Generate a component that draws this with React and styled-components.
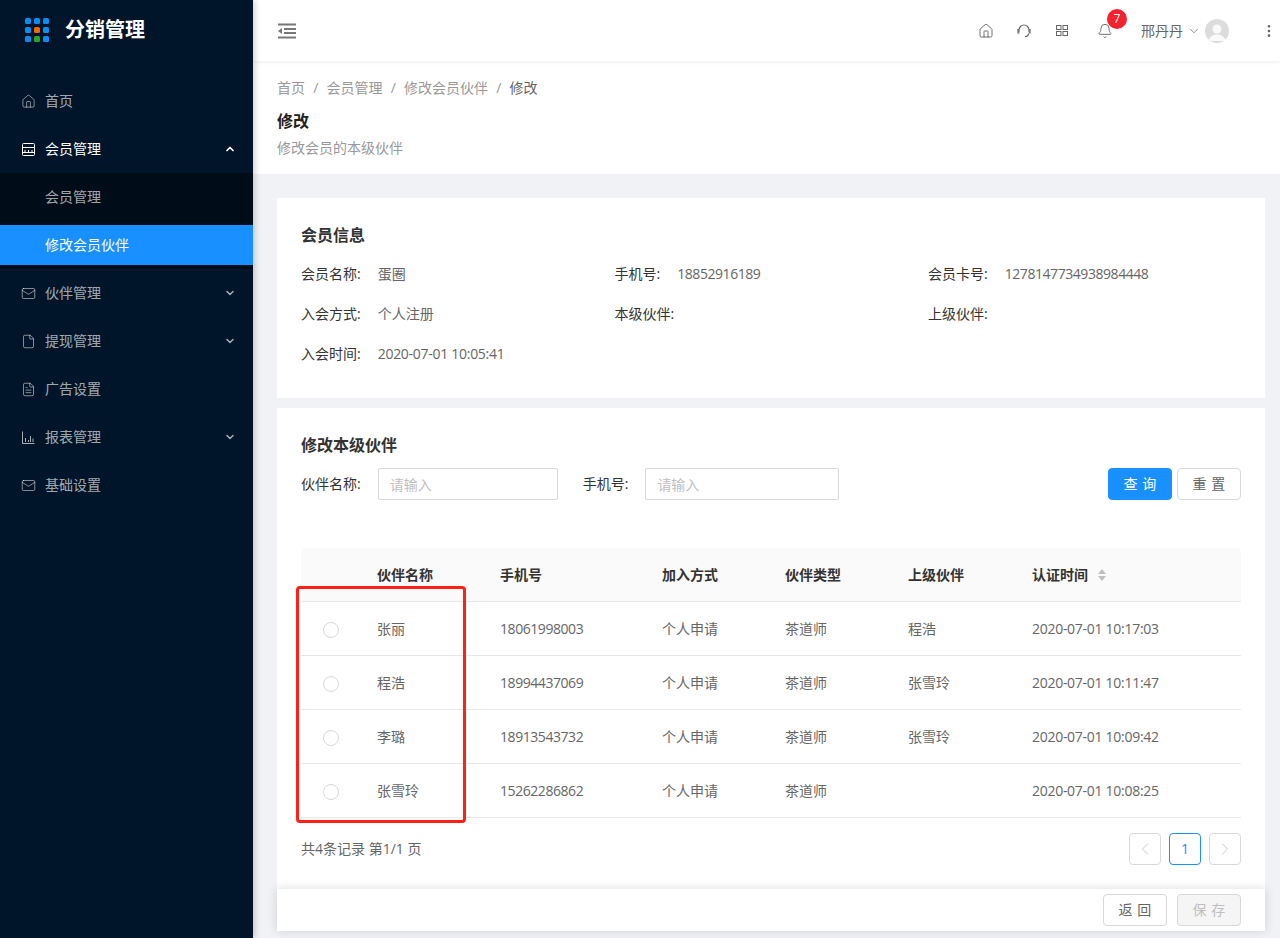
import styled, { createGlobalStyle } from 'styled-components';
import { ChevronDown, ChevronLeft, ChevronRight, ChevronUp, Home, Mail, File, FileText, Bell, MoreVertical } from 'lucide-react';

const GlobalStyle = createGlobalStyle`
  html, body {
    margin: 0;
    padding: 0;
    height: 100%;
    overflow: hidden;
    background: #f0f2f5;
  }
  body {
    font-family: "Open Sans", "Noto Sans CJK SC", sans-serif;
    font-size: 14px;
    line-height: 22px;
    color: #666;
  }
  * { box-sizing: border-box; }
`;

const Layout = styled.div`
  display: flex;
  height: 938px;
  position: relative;
  overflow: hidden;
`;

const Sider = styled.aside`
  width: 253px;
  flex: none;
  background: #001529;
  box-shadow: 2px 0 6px rgba(0, 21, 41, 0.2);
  z-index: 3;
`;

const Logo = styled.div`
  height: 60px;
  margin-bottom: 21px;
  display: flex;
  align-items: center;
  gap: 16px;
  padding-left: 25px;
  color: #fff;
  font-size: 20px;
  font-weight: 700;
`;

const MenuList = styled.nav`
  display: flex;
  flex-direction: column;
`;

const MenuItem = styled.div`
  height: 40px;
  margin-bottom: ${p => (p.$open ? 4 : 8)}px;
  display: flex;
  align-items: center;
  gap: 9px;
  padding: 0 17px 0 21px;
  color: ${p => (p.$open ? '#fff' : 'rgba(255, 255, 255, 0.65)')};
  svg { flex: none; }
`;

const MenuLabel = styled.span`
  flex: 1;
`;

const SubMenu = styled.div`
  background: #000c17;
  padding: 4px 0;
  margin-bottom: 4px;
  display: flex;
  flex-direction: column;
  gap: 8px;
`;

const SubItem = styled.div`
  height: 40px;
  line-height: 40px;
  padding-left: 45px;
  color: ${p => (p.$active ? '#fff' : 'rgba(255, 255, 255, 0.65)')};
  background: ${p => (p.$active ? '#1890ff' : 'transparent')};
`;

const Main = styled.main`
  flex: 1;
  min-width: 0;
  display: flex;
  flex-direction: column;
`;

const Topbar = styled.header`
  height: 61px;
  flex: none;
  background: #fff;
  box-shadow: 0 1px 4px rgba(0, 21, 41, 0.08);
  display: flex;
  align-items: center;
  padding: 0 3px 0 24px;
  z-index: 2;
  color: #666;
`;

const Spacer = styled.div`
  flex: 1;
`;

const TopIcon = styled.span`
  display: flex;
  width: ${p => p.$w || 38}px;
  justify-content: center;
  position: relative;
`;

const Badge = styled.span`
  position: absolute;
  top: -14px;
  left: 26px;
  width: 20px;
  height: 20px;
  border-radius: 50%;
  background: #f5222d;
  color: #fff;
  font-size: 12px;
  line-height: 20px;
  text-align: center;
`;

const UserName = styled.span`
  margin-left: 12px;
  color: #666;
`;

const Avatar = styled.span`
  width: 24px;
  height: 24px;
  margin-right: 32px;
  border-radius: 50%;
  background: #dcdcdc;
  display: flex;
  align-items: center;
  justify-content: center;
  overflow: hidden;
`;

const PageHead = styled.section`
  height: 113px;
  flex: none;
  background: #fff;
  padding: 16px 24px 0;
`;

const Breadcrumb = styled.div`
  display: flex;
  height: 22px;
  color: #999;
  gap: 8.2px;
`;

const CrumbCurrent = styled.span`
  color: #666;
`;

const PageTitle = styled.h1`
  margin: 10px 0 0;
  font-size: 16px;
  line-height: 24px;
  font-weight: 600;
  color: #222;
`;

const PageDesc = styled.div`
  margin-top: 4px;
  color: #999;
`;

const Content = styled.div`
  padding: 24px 15px 0 24px;
  display: flex;
  flex-direction: column;
  gap: 10px;
`;

const Card = styled.section`
  background: #fff;
  padding: 24px;
`;

const CardTitle = styled.h2`
  margin: 0;
  font-size: 16px;
  line-height: 26px;
  font-weight: 600;
  color: #333;
`;

const InfoGrid = styled.div`
  margin-top: 15px;
  display: grid;
  grid-template-columns: repeat(3, 313.5px);
  grid-auto-rows: 40px;
  height: 111px;
`;

const InfoCell = styled.div`
  display: flex;
  gap: 17px;
`;

const Label = styled.span`
  color: #333;
`;

const Num = styled.span`
  letter-spacing: ${p => (p.$date ? -0.28 : -0.44)}px;
`;

const FilterRow = styled.div`
  margin-top: 10px;
  display: flex;
  align-items: center;
  height: 32px;
`;

const TextInput = styled.input`
  width: ${p => p.$w}px;
  height: 32px;
  margin: 0 25px 0 17px;
  padding: 0 11px;
  border: 1px solid #d9d9d9;
  border-radius: 2px;
  font: inherit;
  &::placeholder { color: #bfbfbf; }
`;

const Button = styled.button`
  width: 64px;
  height: 32px;
  margin-left: ${p => p.$gap || 0}px;
  padding: 0;
  border-radius: 4px;
  border: 1px solid ${p => (p.$primary ? '#1890ff' : '#d9d9d9')};
  background: ${p => (p.$primary ? '#1890ff' : p.$disabled ? '#f5f5f5' : '#fff')};
  color: ${p => (p.$primary ? '#fff' : p.$disabled ? '#bfbfbf' : '#666')};
  font: inherit;
  letter-spacing: 0.34em;
  text-indent: 0.34em;
`;

const Table = styled.div`
  margin-top: 48px;
`;

const Row = styled.div`
  display: grid;
  grid-template-columns: 60px 123px 162px 123px 123px 124px 1fr;
  align-items: center;
  height: 54px;
  border-bottom: 1px solid #e8e8e8;
  background: ${p => (p.$head ? '#fafafa' : '#fff')};
  border-radius: ${p => (p.$head ? '4px 4px 0 0' : 0)};
  color: ${p => (p.$head ? '#333' : '#666')};
  font-weight: ${p => (p.$head ? 600 : 400)};
`;

const Cell = styled.div`
  padding-left: 16px;
  display: flex;
  align-items: center;
  gap: 9px;
`;

const RadioCell = styled.div`
  display: flex;
  justify-content: center;
  padding-top: 2px;
`;

const Radio = styled.span`
  width: 16px;
  height: 16px;
  border: 1px solid #d9d9d9;
  border-radius: 50%;
`;

const SortCarets = styled.span`
  display: flex;
  color: #bfbfbf;
`;

const PagerRow = styled.div`
  margin-top: 15px;
  display: flex;
  align-items: center;
  justify-content: space-between;
`;

const Pager = styled.div`
  display: flex;
  gap: 8px;
`;

const PageBtn = styled.span`
  width: 32px;
  height: 32px;
  border: 1px solid ${p => (p.$active ? '#1890ff' : '#d9d9d9')};
  border-radius: 4px;
  background: #fff;
  color: ${p => (p.$active ? '#1890ff' : '#bfbfbf')};
  display: flex;
  align-items: center;
  justify-content: center;
`;

const FooterBar = styled.div`
  position: absolute;
  left: 277px;
  top: 889px;
  width: 988px;
  height: 42px;
  background: #fff;
  box-shadow: 0 0 10px rgba(0, 21, 41, 0.15);
  display: flex;
  align-items: center;
  justify-content: flex-end;
  padding-right: 24px;
  z-index: 2;
`;

const Highlight = styled.div`
  position: absolute;
  left: 296px;
  top: 586px;
  width: 170px;
  height: 237px;
  border: 3px solid #ff2116;
  border-radius: 4px;
  z-index: 1;
`;

const LogoMark = () => {
  const dots = [];
  [0, 1, 2].forEach(r => {
    [0, 1, 2].forEach(c => {
      let fill = '#0a8df0';
      if (r === 1 && c === 1) fill = '#f0640a';
      if (r === 2 && c === 1) fill = '#2aa52a';
      dots.push(<rect key={`${r}-${c}`} x={c * 9} y={r * 9} width="6" height="6" rx="1.5" fill={fill} />);
    });
  });
  return <svg width="24" height="24" viewBox="0 0 24 24">{dots}</svg>;
};

const StoreIcon = props => (
  <svg width="15" height="15" viewBox="0 0 15 15" fill="none" stroke="currentColor" {...props}>
    <rect x="1.5" y="1.5" width="12" height="12" rx="1" />
    <path d="M1.5 5.5h12M4 8v2M7.5 8v2M11 8v2M1.5 10.5h12" />
  </svg>
);

const ChartIcon = props => (
  <svg width="15" height="15" viewBox="0 0 15 15" fill="none" stroke="currentColor" {...props}>
    <path d="M1.5 1.5v12h12M4.5 8v4M7.5 10v2M9.5 6v6M12 8.5v3.5" />
  </svg>
);

const CollapseIcon = () => (
  <svg width="20" height="16" viewBox="0 0 20 16" fill="none">
    <path d="M1 1.5h18M1 14.5h18M7 6h12M7 10h12" stroke="#777" strokeWidth="2" />
    <path d="M1 8l4-3v6z" fill="#777" />
  </svg>
);

const HeadsetIcon = () => (
  <svg width="16" height="16" viewBox="0 0 16 16" fill="none" stroke="currentColor" strokeWidth="1.2">
    <path d="M3 9V7a5 5 0 0 1 10 0v2" />
    <path d="M3 6.5H2V10h1.5M13 6.5h1V10h-1.5" />
    <path d="M12.5 10.5c0 2-1.5 3-3.5 3.2" />
  </svg>
);

const PanelsIcon = () => (
  <svg width="14" height="14" viewBox="0 0 14 14" fill="none" stroke="currentColor">
    <rect x="1.5" y="1.5" width="4.5" height="4" />
    <rect x="8" y="1.5" width="4.5" height="4" />
    <rect x="1.5" y="7.5" width="4.5" height="4" />
    <rect x="8" y="7.5" width="4.5" height="4" />
  </svg>
);

const AvatarFigure = () => (
  <svg width="24" height="24" viewBox="0 0 24 24" fill="#fff" opacity="0.85">
    <circle cx="12" cy="10" r="4.5" />
    <path d="M3.5 22c1-5 5-6.5 8.5-6.5s7.5 1.5 8.5 6.5z" />
  </svg>
);

const CaretsIcon = () => (
  <svg width="10" height="14" viewBox="0 0 10 14" fill="currentColor">
    <path d="M5 1l4 5H1zM5 13L1 8h8z" />
  </svg>
);

const iconProps = { size: 15, strokeWidth: 1.25 };

const menu = [
  { label: '首页', icon: <Home {...iconProps} /> },
  { label: '会员管理', icon: <StoreIcon />, open: true, children: ['会员管理', '修改会员伙伴'] },
  { label: '伙伴管理', icon: <Mail {...iconProps} />, arrow: true },
  { label: '提现管理', icon: <File {...iconProps} />, arrow: true },
  { label: '广告设置', icon: <FileText {...iconProps} /> },
  { label: '报表管理', icon: <ChartIcon />, arrow: true },
  { label: '基础设置', icon: <Mail {...iconProps} /> },
];

const info = [
  ['会员名称:', '蛋圈'],
  ['手机号:', <Num key="phone">18852916189</Num>],
  ['会员卡号:', <Num key="card">1278147734938984448</Num>],
  ['入会方式:', '个人注册'],
  ['本级伙伴:', ''],
  ['上级伙伴:', ''],
  ['入会时间:', <Num key="date" $date>2020-07-01 10:05:41</Num>],
];

const partners = [
  { name: '张丽', phone: '18061998003', parent: '程浩', time: '2020-07-01 10:17:03' },
  { name: '程浩', phone: '18994437069', parent: '张雪玲', time: '2020-07-01 10:11:47' },
  { name: '李璐', phone: '18913543732', parent: '张雪玲', time: '2020-07-01 10:09:42' },
  { name: '张雪玲', phone: '15262286862', parent: '', time: '2020-07-01 10:08:25' },
];

export default function App() {
  return (
    <Layout>
      <GlobalStyle />
      <Sider>
        <Logo>
          <LogoMark />
          分销管理
        </Logo>
        <MenuList>
          {menu.map(item => (
            <div key={item.label}>
              <MenuItem $open={item.open}>
                {item.icon}
                <MenuLabel>{item.label}</MenuLabel>
                {item.open && <ChevronUp size={12} strokeWidth={3.5} />}
                {item.arrow && <ChevronDown size={12} strokeWidth={3} />}
              </MenuItem>
              {item.children && (
                <SubMenu>
                  {item.children.map((child, i) => (
                    <SubItem key={child} $active={i === 1}>{child}</SubItem>
                  ))}
                </SubMenu>
              )}
            </div>
          ))}
        </MenuList>
      </Sider>

      <Main>
        <Topbar>
          <CollapseIcon />
          <Spacer />
          <TopIcon><Home size={16} strokeWidth={1.4} /></TopIcon>
          <TopIcon><HeadsetIcon /></TopIcon>
          <TopIcon><PanelsIcon /></TopIcon>
          <TopIcon $w={48}>
            <Bell size={16} strokeWidth={1.4} />
            <Badge>7</Badge>
          </TopIcon>
          <UserName>邢丹丹</UserName>
          <TopIcon $w={22}><ChevronDown size={14} strokeWidth={1.25} /></TopIcon>
          <Avatar><AvatarFigure /></Avatar>
          <MoreVertical size={16} strokeWidth={2} />
        </Topbar>

        <PageHead>
          <Breadcrumb>
            <span>首页</span><span>/</span>
            <span>会员管理</span><span>/</span>
            <span>修改会员伙伴</span><span>/</span>
            <CrumbCurrent>修改</CrumbCurrent>
          </Breadcrumb>
          <PageTitle>修改</PageTitle>
          <PageDesc>修改会员的本级伙伴</PageDesc>
        </PageHead>

        <Content>
          <Card>
            <CardTitle>会员信息</CardTitle>
            <InfoGrid>
              {info.map(([label, value]) => (
                <InfoCell key={label}>
                  <Label>{label}</Label>
                  <span>{value}</span>
                </InfoCell>
              ))}
            </InfoGrid>
          </Card>

          <Card>
            <CardTitle>修改本级伙伴</CardTitle>
            <FilterRow>
              <Label>伙伴名称:</Label>
              <TextInput $w={180} placeholder="请输入" />
              <Label>手机号:</Label>
              <TextInput $w={194} placeholder="请输入" />
              <Spacer />
              <Button $primary>查询</Button>
              <Button $gap={5}>重置</Button>
            </FilterRow>

            <Table>
              <Row $head>
                <span />
                <Cell>伙伴名称</Cell>
                <Cell>手机号</Cell>
                <Cell>加入方式</Cell>
                <Cell>伙伴类型</Cell>
                <Cell>上级伙伴</Cell>
                <Cell>认证时间<SortCarets><CaretsIcon /></SortCarets></Cell>
              </Row>
              {partners.map(row => (
                <Row key={row.phone}>
                  <RadioCell><Radio /></RadioCell>
                  <Cell>{row.name}</Cell>
                  <Cell><Num>{row.phone}</Num></Cell>
                  <Cell>个人申请</Cell>
                  <Cell>茶道师</Cell>
                  <Cell>{row.parent}</Cell>
                  <Cell><Num $date>{row.time}</Num></Cell>
                </Row>
              ))}
            </Table>

            <PagerRow>
              <span>共4条记录 第1/1 页</span>
              <Pager>
                <PageBtn><ChevronLeft size={20} strokeWidth={1} /></PageBtn>
                <PageBtn $active>1</PageBtn>
                <PageBtn><ChevronRight size={20} strokeWidth={1} /></PageBtn>
              </Pager>
            </PagerRow>
          </Card>
        </Content>
      </Main>

      <Highlight />
      <FooterBar>
        <Button>返回</Button>
        <Button $gap={10} $disabled>保存</Button>
      </FooterBar>
    </Layout>
  );
}
